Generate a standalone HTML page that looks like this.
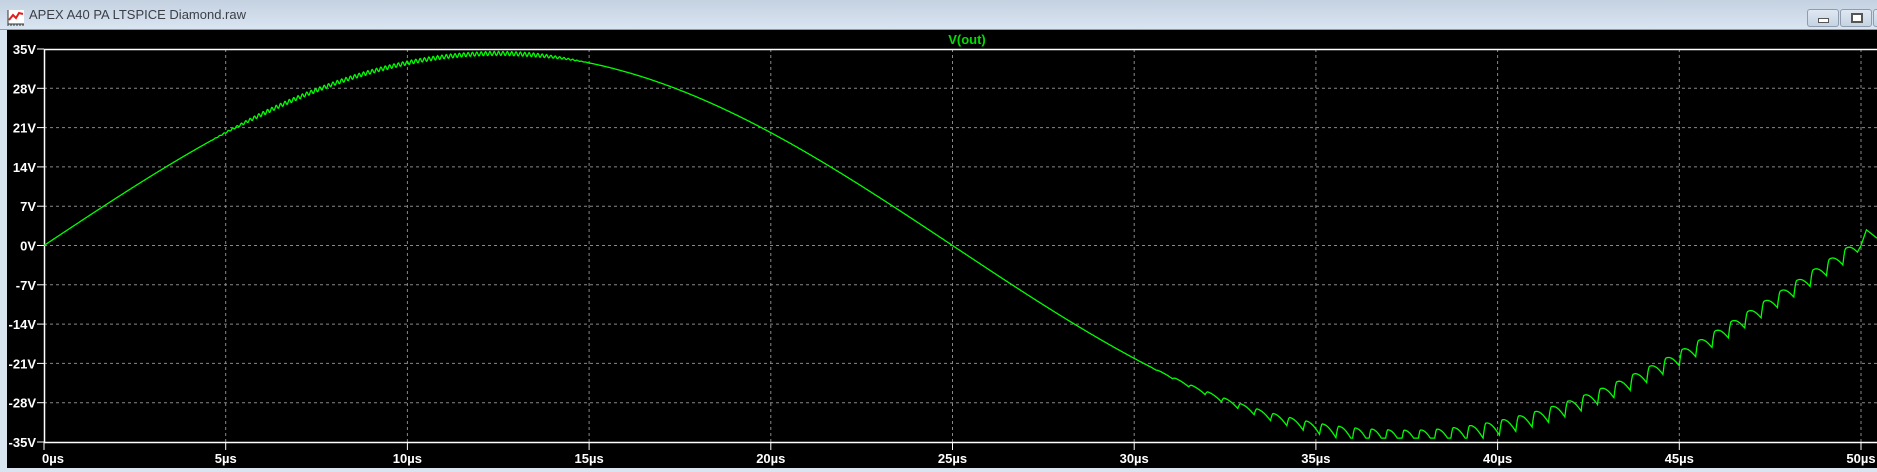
<!DOCTYPE html>
<html><head><meta charset="utf-8"><style>
html,body{margin:0;padding:0;width:1877px;height:472px;overflow:hidden;background:#d9e4f1;font-family:"Liberation Sans",sans-serif}
#tb{position:absolute;left:0;top:0;width:1877px;height:29px;background:linear-gradient(#c4d1e0,#dae5f2);border-bottom:1px solid #8d99a6}
#title{position:absolute;left:29px;top:7px;font-size:13px;color:#3a3f48}
.btn{position:absolute;top:9px;width:30px;height:16px;border:1px solid #8f9cad;border-radius:3px;background:linear-gradient(#dfe8f3,#c5d3e3)}
#pl{position:absolute;left:7px;top:30px;width:1870px;height:438px;background:#000}
svg{position:absolute;left:0;top:0}
</style></head><body>
<div id="tb">
<svg width="30" height="30" style="left:7px;top:8px"><rect x="1" y="2" width="16" height="14" fill="#fff"/><path d="M2 12 L6 7 L9 10 L12 5 L16 6" stroke="#e0201f" stroke-width="2" fill="none"/><path d="M1 2 V16 H17" stroke="#333" fill="none"/><path d="M1 16 V18 M4 16 V18 M7 16 V18 M10 16 V18 M13 16 V18 M16 16 V18" stroke="#333"/></svg>
<div id="title">APEX A40 PA LTSPICE Diamond.raw</div>
<div class="btn" style="left:1807px"><div style="position:absolute;left:10px;top:8px;width:9px;height:3px;border:1px solid #555;background:#fff"></div></div>
<div class="btn" style="left:1840px"><div style="position:absolute;left:10px;top:3px;width:8px;height:6px;border:2px solid #555;background:#fff"></div></div>
<div class="btn" style="left:1873px"></div>
</div>
<div id="pl"></div>
<svg id="s" width="1877" height="472"></svg>
<script>
var s=document.getElementById('s'),h='';
var X0=44,DX=181.7/5,Y0=49,DY=393/70;
function X(t){return X0+t*DX} function Y(v){return Y0+(35-v)*DY}
for(var i=1;i<=10;i++){var x=X(i*5);h+='<line x1="'+x+'" y1="49" x2="'+x+'" y2="442" stroke="#888" stroke-dasharray="3,3"/>';}
for(var k=1;k<10;k++){var y=Y0+k*39.3;h+='<line x1="44" y1="'+y+'" x2="1877" y2="'+y+'" stroke="#888" stroke-dasharray="3,3"/>';}
h+='<line x1="44" y1="49.5" x2="1877" y2="49.5" stroke="#fff" stroke-width="1.5"/>';
h+='<line x1="44" y1="442.5" x2="1877" y2="442.5" stroke="#fff" stroke-width="1.5"/>';
h+='<line x1="44.5" y1="49" x2="44.5" y2="442" stroke="#fff" stroke-width="1.5"/>';
var labs=['35V','28V','21V','14V','7V','0V','-7V','-14V','-21V','-28V','-35V'];
for(var k=0;k<=10;k++){var y=Y0+k*39.3;h+='<line x1="37" y1="'+y+'" x2="44" y2="'+y+'" stroke="#fff"/><text x="36" y="'+(y+5)+'" fill="#fff" font-size="13" font-weight="bold" text-anchor="end" font-family="Liberation Sans">'+labs[k]+'</text>';}
for(var i=0;i<=10;i++){var x=X(i*5);h+='<line x1="'+x+'" y1="442" x2="'+x+'" y2="450" stroke="#fff"/><text x="'+(x+(i==0?9:0))+'" y="463" fill="#fff" font-size="13" font-weight="bold" text-anchor="middle" font-family="Liberation Sans">'+(i*5)+'µs</text>';}
h+='<text x="967" y="44" fill="#00e000" font-size="13" font-weight="bold" text-anchor="middle" font-family="Liberation Sans">V(out)</text>';
var d='';
for(var t=0;t<=49.9;t+=0.01){
 var v=34.2*Math.sin(2*Math.PI*t/50);
 if(t>4.5&&t<15){var a=0.35*Math.min(1,(t-4.5)/1.5,(15-t)/1.5);v+=a*Math.sin(t*2*Math.PI/0.12);}
 if(t>30.3){var A=Math.min(2.6,(t-30.3)*0.4);
  var P=0.45,sf=(t/P)%1,r=sf<0.18?Math.sin(sf/0.18*Math.PI/2):Math.cos((sf-0.18)/0.82*Math.PI/2);v+=A*(r-0.5);}
 if(v<-34.3)v=-34.3;
 d+=(d?'L':'M')+X(t).toFixed(1)+' '+Y(v).toFixed(1);
}
d+='L'+X(50)+' '+Y(0)+'L'+X(50.15)+' '+Y(2.8)+'L1877 '+Y(1.3);
h+='<path d="'+d+'" stroke="#00ff00" stroke-width="1.3" fill="none"/>';
s.innerHTML=h;
</script>
</body></html>
